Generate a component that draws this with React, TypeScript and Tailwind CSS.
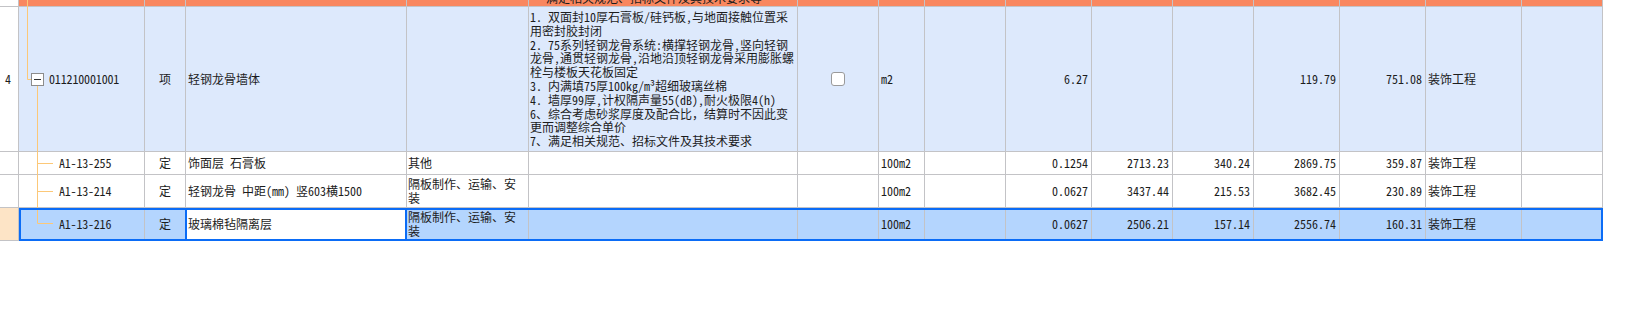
import React from 'react';

const W = [
  'w-[19px]', 'w-[126px]', 'w-[41px]', 'w-[221px]', 'w-[122px]', 'w-[269px]', 'w-[81px]', 'w-[46px]',
  'w-[81px]', 'w-[86px]', 'w-[81px]', 'w-[81px]', 'w-[86px]', 'w-[86px]', 'w-[96px]', 'w-[81px]',
];

const line = 'border-r border-b border-[#c3c3c6] box-border shrink-0';

function Cell({ i, className = '', children }: { i: number; className?: string; children?: React.ReactNode }) {
  return <div className={`${W[i]} ${line} flex items-center overflow-hidden ${className}`}>{children}</div>;
}

const desc = [
  '1. 双面封10厚石膏板/硅钙板,与地面接触位置采',
  '用密封胶封闭',
  '2. 75系列轻钢龙骨系统:横撑轻钢龙骨,竖向轻钢',
  '龙骨,通贯轻钢龙骨,沿地沿顶轻钢龙骨采用膨胀螺',
  '栓与楼板天花板固定',
  '3. 内满填75厚100kg/m³超细玻璃丝棉',
  '4. 墙厚99厚,计权隔声量55(dB),耐火极限4(h)',
  '6、综合考虑砂浆厚度及配合比，结算时不因此变',
  '更而调整综合单价',
  '7、满足相关规范、招标文件及其技术要求',
];

type Sub = {
  code: string;
  name: string;
  work: string[];
  qty: string;
  price: string;
  a: string;
  b: string;
  total: string;
};

const subs: Sub[] = [
  { code: 'A1-13-255', name: '饰面层 石膏板', work: ['其他'], qty: '0.1254', price: '2713.23', a: '340.24', b: '2869.75', total: '359.87' },
  { code: 'A1-13-214', name: '轻钢龙骨 中距(mm) 竖603横1500', work: ['隔板制作、运输、安', '装'], qty: '0.0627', price: '3437.44', a: '215.53', b: '3682.45', total: '230.89' },
  { code: 'A1-13-216', name: '玻璃棉毡隔离层', work: ['隔板制作、运输、安', '装'], qty: '0.0627', price: '2506.21', a: '157.14', b: '2556.74', total: '160.31' },
];

function SubRow({ s, h, selected }: { s: Sub; h: string; selected?: boolean }) {
  const bg = selected ? 'bg-[#b4d5fe]' : 'bg-white';
  return (
    <div className={`flex ${h}`}>
      <Cell i={0} className={selected ? 'bg-[#fde4c6]' : 'bg-white'} />
      <Cell i={1} className={`${bg} pl-[40px] tracking-[-0.2px]`}>{s.code}</Cell>
      <Cell i={2} className={`${bg} justify-center`}>定</Cell>
      <Cell i={3} className={`${selected ? 'bg-white' : bg} pl-[2px] whitespace-nowrap`}>{s.name}</Cell>
      <Cell i={4} className={`${bg} pl-[1px]`}>
        <div className="leading-[14px] whitespace-nowrap">
          {s.work.map((t) => (
            <div key={t}>{t}</div>
          ))}
        </div>
      </Cell>
      <Cell i={5} className={bg} />
      <Cell i={6} className={bg} />
      <Cell i={7} className={`${bg} pl-[2px]`}>100m2</Cell>
      <Cell i={8} className={bg} />
      <Cell i={9} className={`${bg} justify-end pr-[3px]`}>{s.qty}</Cell>
      <Cell i={10} className={`${bg} justify-end pr-[3px]`}>{s.price}</Cell>
      <Cell i={11} className={`${bg} justify-end pr-[3px]`}>{s.a}</Cell>
      <Cell i={12} className={`${bg} justify-end pr-[3px]`}>{s.b}</Cell>
      <Cell i={13} className={`${bg} justify-end pr-[3px]`}>{s.total}</Cell>
      <Cell i={14} className={`${bg} pl-[2px]`}>装饰工程</Cell>
      <Cell i={15} className={bg} />
    </div>
  );
}

function TreeLines() {
  const c = '#fcc878';
  return (
    <svg className="absolute left-0 top-0 pointer-events-none" width="60" height="241" viewBox="0 0 60 241">
      <path d="M27.5 0 V79.5 H31" stroke={c} strokeWidth="1" fill="none" />
      <path d="M37.5 86 V223.5" stroke={c} strokeWidth="1" fill="none" />
      <path d="M37.5 163.5 H53 M37.5 191.5 H53 M37.5 223.5 H53" stroke={c} strokeWidth="1" fill="none" />
      <rect x="31.5" y="73.5" width="12" height="12" fill="#ffffff" stroke="#8c8c8c" strokeWidth="1" />
      <path d="M34 79.5 H41" stroke="#333333" strokeWidth="1" />
    </svg>
  );
}

export default function App() {
  const blue = 'bg-[#dde9fc]';
  const orange = 'bg-[#f9875f]';
  return (
    <div className="w-[1638px] h-[323px] bg-white overflow-hidden text-[12px] text-[#1c1c1c] font-['Noto_Sans_Mono_CJK_SC','Noto_Sans_CJK_SC',monospace]">
      <div className="relative w-[1603px]">
        {/* previous row, scrolled almost out of view */}
        <div className="flex h-[7px]">
          <Cell i={0} className="bg-white" />
          {W.slice(1).map((_, k) =>
            k + 1 === 5 ? (
              <div key={k} className={`${W[5]} ${line} ${orange} overflow-hidden`}>
                <div className="pl-[17px] -mt-[9px] leading-[14px] whitespace-nowrap">满足相关规范、招标文件及其技术要求等</div>
              </div>
            ) : (
              <Cell key={k} i={k + 1} className={orange} />
            ),
          )}
        </div>

        <div className="flex h-[145px]">
          <Cell i={0} className="bg-white justify-center pr-[2px]">4</Cell>
          <Cell i={1} className={`${blue} pl-[30px] tracking-[-0.15px]`}>011210001001</Cell>
          <Cell i={2} className={`${blue} justify-center`}>项</Cell>
          <Cell i={3} className={`${blue} pl-[2px]`}>轻钢龙骨墙体</Cell>
          <Cell i={4} className={blue} />
          <Cell i={5} className={`${blue} pl-[1px]`}>
            <div className="leading-[13.8px] whitespace-nowrap">
              {desc.map((t) => (
                <div key={t}>{t}</div>
              ))}
            </div>
          </Cell>
          <Cell i={6} className={`${blue} justify-center`}>
            <span className="block w-[14px] h-[14px] rounded-[3px] border border-[#9a9a9a] bg-white" />
          </Cell>
          <Cell i={7} className={`${blue} pl-[2px]`}>m2</Cell>
          <Cell i={8} className={blue} />
          <Cell i={9} className={`${blue} justify-end pr-[3px]`}>6.27</Cell>
          <Cell i={10} className={blue} />
          <Cell i={11} className={blue} />
          <Cell i={12} className={`${blue} justify-end pr-[3px]`}>119.79</Cell>
          <Cell i={13} className={`${blue} justify-end pr-[3px]`}>751.08</Cell>
          <Cell i={14} className={`${blue} pl-[2px]`}>装饰工程</Cell>
          <Cell i={15} className={blue} />
        </div>

        <SubRow s={subs[0]} h="h-[23px]" />
        <SubRow s={subs[1]} h="h-[33px]" />
        <SubRow s={subs[2]} h="h-[33px]" selected />

        <TreeLines />
        {/* selection outline and active cell */}
        <div className="absolute left-[19px] top-[208px] w-[1584px] h-[33px] border-2 border-[#0b6cf6] pointer-events-none" />
        <div className="absolute left-[185px] top-[208px] w-[222px] h-[33px] border-2 border-[#0b6cf6] pointer-events-none" />
      </div>
    </div>
  );
}
